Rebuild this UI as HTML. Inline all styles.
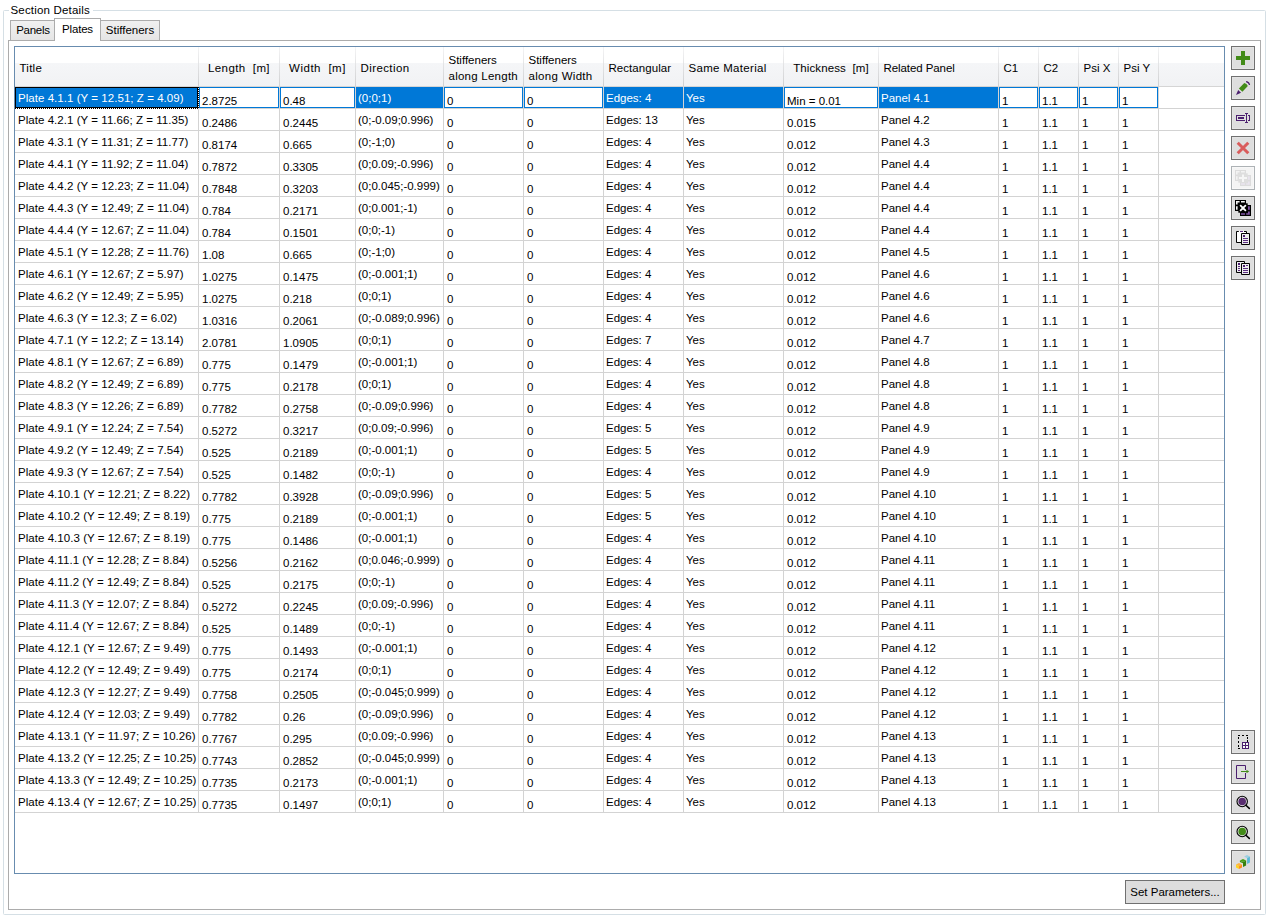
<!DOCTYPE html>
<html><head><meta charset="utf-8"><title>Section Details</title>
<style>
html,body{margin:0;padding:0;background:#fff;}
body{width:1270px;height:919px;position:relative;overflow:hidden;font-family:"Liberation Sans",sans-serif;font-size:11.5px;color:#000;}
div{box-sizing:border-box;}
.gb{position:absolute;left:3px;top:10px;width:1263px;height:905px;border:1px solid #d5dfe5;border-radius:1.5px;}
.gbt{position:absolute;left:9px;top:0;width:84px;height:20px;letter-spacing:0.18px;padding:0 0 0 1.5px;background:#fff;line-height:20px;white-space:nowrap;}
.tabc{position:absolute;left:8px;top:40px;width:1253px;height:870px;border:1px solid #acacac;background:#fff;}
.tab{position:absolute;top:20px;height:21px;border:1px solid #acacac;background:linear-gradient(#f0f0f0,#e5e5e5);line-height:19px;text-align:center;white-space:nowrap;}
.tab.on{top:18px;height:23px;background:#fff;border-bottom:none;line-height:20px;}
.grid{position:absolute;left:14px;top:46px;width:1211px;height:828px;border:1px solid #688caf;background:#fff;overflow:hidden;}
.hdr{position:absolute;left:0;top:0;width:1209px;height:40px;background:linear-gradient(#fff 0,#fff 16px,#f5f6f8 16px,#f1f2f4 39px);border-bottom:1px solid #d5d5d5;}
.hc{position:absolute;top:0;height:39px;line-height:16px;padding:13px 0 0 4.5px;white-space:nowrap;overflow:hidden;}
.hc.ctr{text-align:center;padding-left:0;}
.hc.two{padding-top:5px;}
.hs{position:absolute;top:0;width:1px;height:39px;background:linear-gradient(#f4f4f5,#cfd0d2);}
.vg{position:absolute;top:40px;width:1px;height:726px;background:#d3d3d3;}
.row{position:absolute;left:0;width:1209px;height:22px;border-bottom:1px solid #d3d3d3;}
.c{position:absolute;top:0;height:21px;white-space:nowrap;overflow:hidden;line-height:14px;}
.c.l0{padding:4px 0 0 3px;letter-spacing:0.045px;}
.c.l{padding:4px 0 0 2px;}
.c.t{padding:7px 0 0 3px;}
.sel .c.l0,.sel .c.l{background:#0078d7;color:#fff;}
.sel .c.l0{border:1px solid #000;padding:3px 0 0 2px;}
.sel .c.t{border:1px solid #0078d7;padding:6px 0 0 2px;background:#fff;}
.fv{position:absolute;left:0;top:61px;width:184px;height:1px;background:repeating-linear-gradient(90deg,#000 0,#000 1px,#fff 1px,#fff 2px);}
.fh{position:absolute;left:183px;top:40px;width:1px;height:22px;background:repeating-linear-gradient(180deg,#000 0,#000 1px,#fff 1px,#fff 2px);}
.btn{position:absolute;left:1231px;width:24px;height:24px;border:1px solid #707070;background:#dedede;box-shadow:inset 0 0 0 1px #e4e4e4;}
.btn.dis{border-color:#adb2b5;background:#f4f4f4;box-shadow:inset 0 0 0 1px #f8f8f8;}
.btn svg{position:absolute;left:3px;top:3px;width:16px;height:16px;}
.sp{position:absolute;left:1125px;top:880px;width:100px;height:24px;border:1px solid #707070;background:#ddd;text-align:center;line-height:23px;white-space:nowrap;}
</style></head><body>
<div class="gb"></div>
<div class="gbt">Section Details</div>
<div class="tabc"></div>
<div class="tab" style="left:10px;width:45px;letter-spacing:-0.25px;padding-left:1px">Panels</div>
<div class="tab" style="left:100px;width:60px">Stiffeners</div>
<div class="tab on" style="left:54px;width:47px;letter-spacing:-0.2px">Plates</div>
<div class="grid">

<div class="hdr">
<div class="hc l" style="left:0px;width:183px;letter-spacing:0.25px">Title</div>
<div class="hs" style="left:183px"></div>
<div class="hc ctr" style="left:184px;width:80px;letter-spacing:0.4px">Length&nbsp; [m]</div>
<div class="hs" style="left:264px"></div>
<div class="hc ctr" style="left:265px;width:75px;letter-spacing:0.5px">Width&nbsp; [m]</div>
<div class="hs" style="left:340px"></div>
<div class="hc l" style="left:341px;width:87px;letter-spacing:0.4px">Direction</div>
<div class="hs" style="left:428px"></div>
<div class="hc l two" style="left:429px;width:79px">Stiffeners<br><span style='letter-spacing:0.25px'>along Length</span></div>
<div class="hs" style="left:508px"></div>
<div class="hc l two" style="left:509px;width:79px">Stiffeners<br><span style='letter-spacing:0.3px'>along Width</span></div>
<div class="hs" style="left:588px"></div>
<div class="hc l" style="left:589px;width:79px;letter-spacing:0.05px">Rectangular</div>
<div class="hs" style="left:668px"></div>
<div class="hc l" style="left:669px;width:99px;letter-spacing:0.3px">Same Material</div>
<div class="hs" style="left:768px"></div>
<div class="hc ctr" style="left:769px;width:94px;letter-spacing:0.1px">Thickness&nbsp; [m]</div>
<div class="hs" style="left:863px"></div>
<div class="hc l" style="left:864px;width:119px;letter-spacing:-0.08px">Related Panel</div>
<div class="hs" style="left:983px"></div>
<div class="hc l" style="left:984px;width:39px">C1</div>
<div class="hs" style="left:1023px"></div>
<div class="hc l" style="left:1024px;width:39px">C2</div>
<div class="hs" style="left:1063px"></div>
<div class="hc l" style="left:1064px;width:39px">Psi X</div>
<div class="hs" style="left:1103px"></div>
<div class="hc l" style="left:1104px;width:39px">Psi Y</div>
<div class="hs" style="left:1143px"></div>
</div>
<div class="vg" style="left:183px"></div>
<div class="vg" style="left:264px"></div>
<div class="vg" style="left:340px"></div>
<div class="vg" style="left:428px"></div>
<div class="vg" style="left:508px"></div>
<div class="vg" style="left:588px"></div>
<div class="vg" style="left:668px"></div>
<div class="vg" style="left:768px"></div>
<div class="vg" style="left:863px"></div>
<div class="vg" style="left:983px"></div>
<div class="vg" style="left:1023px"></div>
<div class="vg" style="left:1063px"></div>
<div class="vg" style="left:1103px"></div>
<div class="vg" style="left:1143px"></div>
<div class="row sel" style="top:40px">
<div class="c l0" style="left:0px;width:183px">Plate 4.1.1 (Y = 12.51; Z = 4.09)</div>
<div class="c t" style="left:184px;width:80px">2.8725</div>
<div class="c t" style="left:265px;width:75px">0.48</div>
<div class="c l" style="left:341px;width:87px">(0;0;1)</div>
<div class="c t" style="left:429px;width:79px">0</div>
<div class="c t" style="left:509px;width:79px">0</div>
<div class="c l" style="left:589px;width:79px">Edges: 4</div>
<div class="c l" style="left:669px;width:99px">Yes</div>
<div class="c t" style="left:769px;width:94px">Min = 0.01</div>
<div class="c l" style="left:864px;width:119px">Panel 4.1</div>
<div class="c t" style="left:984px;width:39px">1</div>
<div class="c t" style="left:1024px;width:39px">1.1</div>
<div class="c t" style="left:1064px;width:39px">1</div>
<div class="c t" style="left:1104px;width:39px">1</div>
</div>
<div class="row" style="top:62px">
<div class="c l0" style="left:0px;width:183px">Plate 4.2.1 (Y = 11.66; Z = 11.35)</div>
<div class="c t" style="left:184px;width:80px">0.2486</div>
<div class="c t" style="left:265px;width:75px">0.2445</div>
<div class="c l" style="left:341px;width:87px">(0;-0.09;0.996)</div>
<div class="c t" style="left:429px;width:79px">0</div>
<div class="c t" style="left:509px;width:79px">0</div>
<div class="c l" style="left:589px;width:79px">Edges: 13</div>
<div class="c l" style="left:669px;width:99px">Yes</div>
<div class="c t" style="left:769px;width:94px">0.015</div>
<div class="c l" style="left:864px;width:119px">Panel 4.2</div>
<div class="c t" style="left:984px;width:39px">1</div>
<div class="c t" style="left:1024px;width:39px">1.1</div>
<div class="c t" style="left:1064px;width:39px">1</div>
<div class="c t" style="left:1104px;width:39px">1</div>
</div>
<div class="row" style="top:84px">
<div class="c l0" style="left:0px;width:183px">Plate 4.3.1 (Y = 11.31; Z = 11.77)</div>
<div class="c t" style="left:184px;width:80px">0.8174</div>
<div class="c t" style="left:265px;width:75px">0.665</div>
<div class="c l" style="left:341px;width:87px">(0;-1;0)</div>
<div class="c t" style="left:429px;width:79px">0</div>
<div class="c t" style="left:509px;width:79px">0</div>
<div class="c l" style="left:589px;width:79px">Edges: 4</div>
<div class="c l" style="left:669px;width:99px">Yes</div>
<div class="c t" style="left:769px;width:94px">0.012</div>
<div class="c l" style="left:864px;width:119px">Panel 4.3</div>
<div class="c t" style="left:984px;width:39px">1</div>
<div class="c t" style="left:1024px;width:39px">1.1</div>
<div class="c t" style="left:1064px;width:39px">1</div>
<div class="c t" style="left:1104px;width:39px">1</div>
</div>
<div class="row" style="top:106px">
<div class="c l0" style="left:0px;width:183px">Plate 4.4.1 (Y = 11.92; Z = 11.04)</div>
<div class="c t" style="left:184px;width:80px">0.7872</div>
<div class="c t" style="left:265px;width:75px">0.3305</div>
<div class="c l" style="left:341px;width:87px">(0;0.09;-0.996)</div>
<div class="c t" style="left:429px;width:79px">0</div>
<div class="c t" style="left:509px;width:79px">0</div>
<div class="c l" style="left:589px;width:79px">Edges: 4</div>
<div class="c l" style="left:669px;width:99px">Yes</div>
<div class="c t" style="left:769px;width:94px">0.012</div>
<div class="c l" style="left:864px;width:119px">Panel 4.4</div>
<div class="c t" style="left:984px;width:39px">1</div>
<div class="c t" style="left:1024px;width:39px">1.1</div>
<div class="c t" style="left:1064px;width:39px">1</div>
<div class="c t" style="left:1104px;width:39px">1</div>
</div>
<div class="row" style="top:128px">
<div class="c l0" style="left:0px;width:183px">Plate 4.4.2 (Y = 12.23; Z = 11.04)</div>
<div class="c t" style="left:184px;width:80px">0.7848</div>
<div class="c t" style="left:265px;width:75px">0.3203</div>
<div class="c l" style="left:341px;width:87px">(0;0.045;-0.999)</div>
<div class="c t" style="left:429px;width:79px">0</div>
<div class="c t" style="left:509px;width:79px">0</div>
<div class="c l" style="left:589px;width:79px">Edges: 4</div>
<div class="c l" style="left:669px;width:99px">Yes</div>
<div class="c t" style="left:769px;width:94px">0.012</div>
<div class="c l" style="left:864px;width:119px">Panel 4.4</div>
<div class="c t" style="left:984px;width:39px">1</div>
<div class="c t" style="left:1024px;width:39px">1.1</div>
<div class="c t" style="left:1064px;width:39px">1</div>
<div class="c t" style="left:1104px;width:39px">1</div>
</div>
<div class="row" style="top:150px">
<div class="c l0" style="left:0px;width:183px">Plate 4.4.3 (Y = 12.49; Z = 11.04)</div>
<div class="c t" style="left:184px;width:80px">0.784</div>
<div class="c t" style="left:265px;width:75px">0.2171</div>
<div class="c l" style="left:341px;width:87px">(0;0.001;-1)</div>
<div class="c t" style="left:429px;width:79px">0</div>
<div class="c t" style="left:509px;width:79px">0</div>
<div class="c l" style="left:589px;width:79px">Edges: 4</div>
<div class="c l" style="left:669px;width:99px">Yes</div>
<div class="c t" style="left:769px;width:94px">0.012</div>
<div class="c l" style="left:864px;width:119px">Panel 4.4</div>
<div class="c t" style="left:984px;width:39px">1</div>
<div class="c t" style="left:1024px;width:39px">1.1</div>
<div class="c t" style="left:1064px;width:39px">1</div>
<div class="c t" style="left:1104px;width:39px">1</div>
</div>
<div class="row" style="top:172px">
<div class="c l0" style="left:0px;width:183px">Plate 4.4.4 (Y = 12.67; Z = 11.04)</div>
<div class="c t" style="left:184px;width:80px">0.784</div>
<div class="c t" style="left:265px;width:75px">0.1501</div>
<div class="c l" style="left:341px;width:87px">(0;0;-1)</div>
<div class="c t" style="left:429px;width:79px">0</div>
<div class="c t" style="left:509px;width:79px">0</div>
<div class="c l" style="left:589px;width:79px">Edges: 4</div>
<div class="c l" style="left:669px;width:99px">Yes</div>
<div class="c t" style="left:769px;width:94px">0.012</div>
<div class="c l" style="left:864px;width:119px">Panel 4.4</div>
<div class="c t" style="left:984px;width:39px">1</div>
<div class="c t" style="left:1024px;width:39px">1.1</div>
<div class="c t" style="left:1064px;width:39px">1</div>
<div class="c t" style="left:1104px;width:39px">1</div>
</div>
<div class="row" style="top:194px">
<div class="c l0" style="left:0px;width:183px">Plate 4.5.1 (Y = 12.28; Z = 11.76)</div>
<div class="c t" style="left:184px;width:80px">1.08</div>
<div class="c t" style="left:265px;width:75px">0.665</div>
<div class="c l" style="left:341px;width:87px">(0;-1;0)</div>
<div class="c t" style="left:429px;width:79px">0</div>
<div class="c t" style="left:509px;width:79px">0</div>
<div class="c l" style="left:589px;width:79px">Edges: 4</div>
<div class="c l" style="left:669px;width:99px">Yes</div>
<div class="c t" style="left:769px;width:94px">0.012</div>
<div class="c l" style="left:864px;width:119px">Panel 4.5</div>
<div class="c t" style="left:984px;width:39px">1</div>
<div class="c t" style="left:1024px;width:39px">1.1</div>
<div class="c t" style="left:1064px;width:39px">1</div>
<div class="c t" style="left:1104px;width:39px">1</div>
</div>
<div class="row" style="top:216px">
<div class="c l0" style="left:0px;width:183px">Plate 4.6.1 (Y = 12.67; Z = 5.97)</div>
<div class="c t" style="left:184px;width:80px">1.0275</div>
<div class="c t" style="left:265px;width:75px">0.1475</div>
<div class="c l" style="left:341px;width:87px">(0;-0.001;1)</div>
<div class="c t" style="left:429px;width:79px">0</div>
<div class="c t" style="left:509px;width:79px">0</div>
<div class="c l" style="left:589px;width:79px">Edges: 4</div>
<div class="c l" style="left:669px;width:99px">Yes</div>
<div class="c t" style="left:769px;width:94px">0.012</div>
<div class="c l" style="left:864px;width:119px">Panel 4.6</div>
<div class="c t" style="left:984px;width:39px">1</div>
<div class="c t" style="left:1024px;width:39px">1.1</div>
<div class="c t" style="left:1064px;width:39px">1</div>
<div class="c t" style="left:1104px;width:39px">1</div>
</div>
<div class="row" style="top:238px">
<div class="c l0" style="left:0px;width:183px">Plate 4.6.2 (Y = 12.49; Z = 5.95)</div>
<div class="c t" style="left:184px;width:80px">1.0275</div>
<div class="c t" style="left:265px;width:75px">0.218</div>
<div class="c l" style="left:341px;width:87px">(0;0;1)</div>
<div class="c t" style="left:429px;width:79px">0</div>
<div class="c t" style="left:509px;width:79px">0</div>
<div class="c l" style="left:589px;width:79px">Edges: 4</div>
<div class="c l" style="left:669px;width:99px">Yes</div>
<div class="c t" style="left:769px;width:94px">0.012</div>
<div class="c l" style="left:864px;width:119px">Panel 4.6</div>
<div class="c t" style="left:984px;width:39px">1</div>
<div class="c t" style="left:1024px;width:39px">1.1</div>
<div class="c t" style="left:1064px;width:39px">1</div>
<div class="c t" style="left:1104px;width:39px">1</div>
</div>
<div class="row" style="top:260px">
<div class="c l0" style="left:0px;width:183px">Plate 4.6.3 (Y = 12.3; Z = 6.02)</div>
<div class="c t" style="left:184px;width:80px">1.0316</div>
<div class="c t" style="left:265px;width:75px">0.2061</div>
<div class="c l" style="left:341px;width:87px">(0;-0.089;0.996)</div>
<div class="c t" style="left:429px;width:79px">0</div>
<div class="c t" style="left:509px;width:79px">0</div>
<div class="c l" style="left:589px;width:79px">Edges: 4</div>
<div class="c l" style="left:669px;width:99px">Yes</div>
<div class="c t" style="left:769px;width:94px">0.012</div>
<div class="c l" style="left:864px;width:119px">Panel 4.6</div>
<div class="c t" style="left:984px;width:39px">1</div>
<div class="c t" style="left:1024px;width:39px">1.1</div>
<div class="c t" style="left:1064px;width:39px">1</div>
<div class="c t" style="left:1104px;width:39px">1</div>
</div>
<div class="row" style="top:282px">
<div class="c l0" style="left:0px;width:183px">Plate 4.7.1 (Y = 12.2; Z = 13.14)</div>
<div class="c t" style="left:184px;width:80px">2.0781</div>
<div class="c t" style="left:265px;width:75px">1.0905</div>
<div class="c l" style="left:341px;width:87px">(0;0;1)</div>
<div class="c t" style="left:429px;width:79px">0</div>
<div class="c t" style="left:509px;width:79px">0</div>
<div class="c l" style="left:589px;width:79px">Edges: 7</div>
<div class="c l" style="left:669px;width:99px">Yes</div>
<div class="c t" style="left:769px;width:94px">0.012</div>
<div class="c l" style="left:864px;width:119px">Panel 4.7</div>
<div class="c t" style="left:984px;width:39px">1</div>
<div class="c t" style="left:1024px;width:39px">1.1</div>
<div class="c t" style="left:1064px;width:39px">1</div>
<div class="c t" style="left:1104px;width:39px">1</div>
</div>
<div class="row" style="top:304px">
<div class="c l0" style="left:0px;width:183px">Plate 4.8.1 (Y = 12.67; Z = 6.89)</div>
<div class="c t" style="left:184px;width:80px">0.775</div>
<div class="c t" style="left:265px;width:75px">0.1479</div>
<div class="c l" style="left:341px;width:87px">(0;-0.001;1)</div>
<div class="c t" style="left:429px;width:79px">0</div>
<div class="c t" style="left:509px;width:79px">0</div>
<div class="c l" style="left:589px;width:79px">Edges: 4</div>
<div class="c l" style="left:669px;width:99px">Yes</div>
<div class="c t" style="left:769px;width:94px">0.012</div>
<div class="c l" style="left:864px;width:119px">Panel 4.8</div>
<div class="c t" style="left:984px;width:39px">1</div>
<div class="c t" style="left:1024px;width:39px">1.1</div>
<div class="c t" style="left:1064px;width:39px">1</div>
<div class="c t" style="left:1104px;width:39px">1</div>
</div>
<div class="row" style="top:326px">
<div class="c l0" style="left:0px;width:183px">Plate 4.8.2 (Y = 12.49; Z = 6.89)</div>
<div class="c t" style="left:184px;width:80px">0.775</div>
<div class="c t" style="left:265px;width:75px">0.2178</div>
<div class="c l" style="left:341px;width:87px">(0;0;1)</div>
<div class="c t" style="left:429px;width:79px">0</div>
<div class="c t" style="left:509px;width:79px">0</div>
<div class="c l" style="left:589px;width:79px">Edges: 4</div>
<div class="c l" style="left:669px;width:99px">Yes</div>
<div class="c t" style="left:769px;width:94px">0.012</div>
<div class="c l" style="left:864px;width:119px">Panel 4.8</div>
<div class="c t" style="left:984px;width:39px">1</div>
<div class="c t" style="left:1024px;width:39px">1.1</div>
<div class="c t" style="left:1064px;width:39px">1</div>
<div class="c t" style="left:1104px;width:39px">1</div>
</div>
<div class="row" style="top:348px">
<div class="c l0" style="left:0px;width:183px">Plate 4.8.3 (Y = 12.26; Z = 6.89)</div>
<div class="c t" style="left:184px;width:80px">0.7782</div>
<div class="c t" style="left:265px;width:75px">0.2758</div>
<div class="c l" style="left:341px;width:87px">(0;-0.09;0.996)</div>
<div class="c t" style="left:429px;width:79px">0</div>
<div class="c t" style="left:509px;width:79px">0</div>
<div class="c l" style="left:589px;width:79px">Edges: 4</div>
<div class="c l" style="left:669px;width:99px">Yes</div>
<div class="c t" style="left:769px;width:94px">0.012</div>
<div class="c l" style="left:864px;width:119px">Panel 4.8</div>
<div class="c t" style="left:984px;width:39px">1</div>
<div class="c t" style="left:1024px;width:39px">1.1</div>
<div class="c t" style="left:1064px;width:39px">1</div>
<div class="c t" style="left:1104px;width:39px">1</div>
</div>
<div class="row" style="top:370px">
<div class="c l0" style="left:0px;width:183px">Plate 4.9.1 (Y = 12.24; Z = 7.54)</div>
<div class="c t" style="left:184px;width:80px">0.5272</div>
<div class="c t" style="left:265px;width:75px">0.3217</div>
<div class="c l" style="left:341px;width:87px">(0;0.09;-0.996)</div>
<div class="c t" style="left:429px;width:79px">0</div>
<div class="c t" style="left:509px;width:79px">0</div>
<div class="c l" style="left:589px;width:79px">Edges: 5</div>
<div class="c l" style="left:669px;width:99px">Yes</div>
<div class="c t" style="left:769px;width:94px">0.012</div>
<div class="c l" style="left:864px;width:119px">Panel 4.9</div>
<div class="c t" style="left:984px;width:39px">1</div>
<div class="c t" style="left:1024px;width:39px">1.1</div>
<div class="c t" style="left:1064px;width:39px">1</div>
<div class="c t" style="left:1104px;width:39px">1</div>
</div>
<div class="row" style="top:392px">
<div class="c l0" style="left:0px;width:183px">Plate 4.9.2 (Y = 12.49; Z = 7.54)</div>
<div class="c t" style="left:184px;width:80px">0.525</div>
<div class="c t" style="left:265px;width:75px">0.2189</div>
<div class="c l" style="left:341px;width:87px">(0;-0.001;1)</div>
<div class="c t" style="left:429px;width:79px">0</div>
<div class="c t" style="left:509px;width:79px">0</div>
<div class="c l" style="left:589px;width:79px">Edges: 5</div>
<div class="c l" style="left:669px;width:99px">Yes</div>
<div class="c t" style="left:769px;width:94px">0.012</div>
<div class="c l" style="left:864px;width:119px">Panel 4.9</div>
<div class="c t" style="left:984px;width:39px">1</div>
<div class="c t" style="left:1024px;width:39px">1.1</div>
<div class="c t" style="left:1064px;width:39px">1</div>
<div class="c t" style="left:1104px;width:39px">1</div>
</div>
<div class="row" style="top:414px">
<div class="c l0" style="left:0px;width:183px">Plate 4.9.3 (Y = 12.67; Z = 7.54)</div>
<div class="c t" style="left:184px;width:80px">0.525</div>
<div class="c t" style="left:265px;width:75px">0.1482</div>
<div class="c l" style="left:341px;width:87px">(0;0;-1)</div>
<div class="c t" style="left:429px;width:79px">0</div>
<div class="c t" style="left:509px;width:79px">0</div>
<div class="c l" style="left:589px;width:79px">Edges: 4</div>
<div class="c l" style="left:669px;width:99px">Yes</div>
<div class="c t" style="left:769px;width:94px">0.012</div>
<div class="c l" style="left:864px;width:119px">Panel 4.9</div>
<div class="c t" style="left:984px;width:39px">1</div>
<div class="c t" style="left:1024px;width:39px">1.1</div>
<div class="c t" style="left:1064px;width:39px">1</div>
<div class="c t" style="left:1104px;width:39px">1</div>
</div>
<div class="row" style="top:436px">
<div class="c l0" style="left:0px;width:183px">Plate 4.10.1 (Y = 12.21; Z = 8.22)</div>
<div class="c t" style="left:184px;width:80px">0.7782</div>
<div class="c t" style="left:265px;width:75px">0.3928</div>
<div class="c l" style="left:341px;width:87px">(0;-0.09;0.996)</div>
<div class="c t" style="left:429px;width:79px">0</div>
<div class="c t" style="left:509px;width:79px">0</div>
<div class="c l" style="left:589px;width:79px">Edges: 5</div>
<div class="c l" style="left:669px;width:99px">Yes</div>
<div class="c t" style="left:769px;width:94px">0.012</div>
<div class="c l" style="left:864px;width:119px">Panel 4.10</div>
<div class="c t" style="left:984px;width:39px">1</div>
<div class="c t" style="left:1024px;width:39px">1.1</div>
<div class="c t" style="left:1064px;width:39px">1</div>
<div class="c t" style="left:1104px;width:39px">1</div>
</div>
<div class="row" style="top:458px">
<div class="c l0" style="left:0px;width:183px">Plate 4.10.2 (Y = 12.49; Z = 8.19)</div>
<div class="c t" style="left:184px;width:80px">0.775</div>
<div class="c t" style="left:265px;width:75px">0.2189</div>
<div class="c l" style="left:341px;width:87px">(0;-0.001;1)</div>
<div class="c t" style="left:429px;width:79px">0</div>
<div class="c t" style="left:509px;width:79px">0</div>
<div class="c l" style="left:589px;width:79px">Edges: 5</div>
<div class="c l" style="left:669px;width:99px">Yes</div>
<div class="c t" style="left:769px;width:94px">0.012</div>
<div class="c l" style="left:864px;width:119px">Panel 4.10</div>
<div class="c t" style="left:984px;width:39px">1</div>
<div class="c t" style="left:1024px;width:39px">1.1</div>
<div class="c t" style="left:1064px;width:39px">1</div>
<div class="c t" style="left:1104px;width:39px">1</div>
</div>
<div class="row" style="top:480px">
<div class="c l0" style="left:0px;width:183px">Plate 4.10.3 (Y = 12.67; Z = 8.19)</div>
<div class="c t" style="left:184px;width:80px">0.775</div>
<div class="c t" style="left:265px;width:75px">0.1486</div>
<div class="c l" style="left:341px;width:87px">(0;-0.001;1)</div>
<div class="c t" style="left:429px;width:79px">0</div>
<div class="c t" style="left:509px;width:79px">0</div>
<div class="c l" style="left:589px;width:79px">Edges: 4</div>
<div class="c l" style="left:669px;width:99px">Yes</div>
<div class="c t" style="left:769px;width:94px">0.012</div>
<div class="c l" style="left:864px;width:119px">Panel 4.10</div>
<div class="c t" style="left:984px;width:39px">1</div>
<div class="c t" style="left:1024px;width:39px">1.1</div>
<div class="c t" style="left:1064px;width:39px">1</div>
<div class="c t" style="left:1104px;width:39px">1</div>
</div>
<div class="row" style="top:502px">
<div class="c l0" style="left:0px;width:183px">Plate 4.11.1 (Y = 12.28; Z = 8.84)</div>
<div class="c t" style="left:184px;width:80px">0.5256</div>
<div class="c t" style="left:265px;width:75px">0.2162</div>
<div class="c l" style="left:341px;width:87px">(0;0.046;-0.999)</div>
<div class="c t" style="left:429px;width:79px">0</div>
<div class="c t" style="left:509px;width:79px">0</div>
<div class="c l" style="left:589px;width:79px">Edges: 4</div>
<div class="c l" style="left:669px;width:99px">Yes</div>
<div class="c t" style="left:769px;width:94px">0.012</div>
<div class="c l" style="left:864px;width:119px">Panel 4.11</div>
<div class="c t" style="left:984px;width:39px">1</div>
<div class="c t" style="left:1024px;width:39px">1.1</div>
<div class="c t" style="left:1064px;width:39px">1</div>
<div class="c t" style="left:1104px;width:39px">1</div>
</div>
<div class="row" style="top:524px">
<div class="c l0" style="left:0px;width:183px">Plate 4.11.2 (Y = 12.49; Z = 8.84)</div>
<div class="c t" style="left:184px;width:80px">0.525</div>
<div class="c t" style="left:265px;width:75px">0.2175</div>
<div class="c l" style="left:341px;width:87px">(0;0;-1)</div>
<div class="c t" style="left:429px;width:79px">0</div>
<div class="c t" style="left:509px;width:79px">0</div>
<div class="c l" style="left:589px;width:79px">Edges: 4</div>
<div class="c l" style="left:669px;width:99px">Yes</div>
<div class="c t" style="left:769px;width:94px">0.012</div>
<div class="c l" style="left:864px;width:119px">Panel 4.11</div>
<div class="c t" style="left:984px;width:39px">1</div>
<div class="c t" style="left:1024px;width:39px">1.1</div>
<div class="c t" style="left:1064px;width:39px">1</div>
<div class="c t" style="left:1104px;width:39px">1</div>
</div>
<div class="row" style="top:546px">
<div class="c l0" style="left:0px;width:183px">Plate 4.11.3 (Y = 12.07; Z = 8.84)</div>
<div class="c t" style="left:184px;width:80px">0.5272</div>
<div class="c t" style="left:265px;width:75px">0.2245</div>
<div class="c l" style="left:341px;width:87px">(0;0.09;-0.996)</div>
<div class="c t" style="left:429px;width:79px">0</div>
<div class="c t" style="left:509px;width:79px">0</div>
<div class="c l" style="left:589px;width:79px">Edges: 4</div>
<div class="c l" style="left:669px;width:99px">Yes</div>
<div class="c t" style="left:769px;width:94px">0.012</div>
<div class="c l" style="left:864px;width:119px">Panel 4.11</div>
<div class="c t" style="left:984px;width:39px">1</div>
<div class="c t" style="left:1024px;width:39px">1.1</div>
<div class="c t" style="left:1064px;width:39px">1</div>
<div class="c t" style="left:1104px;width:39px">1</div>
</div>
<div class="row" style="top:568px">
<div class="c l0" style="left:0px;width:183px">Plate 4.11.4 (Y = 12.67; Z = 8.84)</div>
<div class="c t" style="left:184px;width:80px">0.525</div>
<div class="c t" style="left:265px;width:75px">0.1489</div>
<div class="c l" style="left:341px;width:87px">(0;0;-1)</div>
<div class="c t" style="left:429px;width:79px">0</div>
<div class="c t" style="left:509px;width:79px">0</div>
<div class="c l" style="left:589px;width:79px">Edges: 4</div>
<div class="c l" style="left:669px;width:99px">Yes</div>
<div class="c t" style="left:769px;width:94px">0.012</div>
<div class="c l" style="left:864px;width:119px">Panel 4.11</div>
<div class="c t" style="left:984px;width:39px">1</div>
<div class="c t" style="left:1024px;width:39px">1.1</div>
<div class="c t" style="left:1064px;width:39px">1</div>
<div class="c t" style="left:1104px;width:39px">1</div>
</div>
<div class="row" style="top:590px">
<div class="c l0" style="left:0px;width:183px">Plate 4.12.1 (Y = 12.67; Z = 9.49)</div>
<div class="c t" style="left:184px;width:80px">0.775</div>
<div class="c t" style="left:265px;width:75px">0.1493</div>
<div class="c l" style="left:341px;width:87px">(0;-0.001;1)</div>
<div class="c t" style="left:429px;width:79px">0</div>
<div class="c t" style="left:509px;width:79px">0</div>
<div class="c l" style="left:589px;width:79px">Edges: 4</div>
<div class="c l" style="left:669px;width:99px">Yes</div>
<div class="c t" style="left:769px;width:94px">0.012</div>
<div class="c l" style="left:864px;width:119px">Panel 4.12</div>
<div class="c t" style="left:984px;width:39px">1</div>
<div class="c t" style="left:1024px;width:39px">1.1</div>
<div class="c t" style="left:1064px;width:39px">1</div>
<div class="c t" style="left:1104px;width:39px">1</div>
</div>
<div class="row" style="top:612px">
<div class="c l0" style="left:0px;width:183px">Plate 4.12.2 (Y = 12.49; Z = 9.49)</div>
<div class="c t" style="left:184px;width:80px">0.775</div>
<div class="c t" style="left:265px;width:75px">0.2174</div>
<div class="c l" style="left:341px;width:87px">(0;0;1)</div>
<div class="c t" style="left:429px;width:79px">0</div>
<div class="c t" style="left:509px;width:79px">0</div>
<div class="c l" style="left:589px;width:79px">Edges: 4</div>
<div class="c l" style="left:669px;width:99px">Yes</div>
<div class="c t" style="left:769px;width:94px">0.012</div>
<div class="c l" style="left:864px;width:119px">Panel 4.12</div>
<div class="c t" style="left:984px;width:39px">1</div>
<div class="c t" style="left:1024px;width:39px">1.1</div>
<div class="c t" style="left:1064px;width:39px">1</div>
<div class="c t" style="left:1104px;width:39px">1</div>
</div>
<div class="row" style="top:634px">
<div class="c l0" style="left:0px;width:183px">Plate 4.12.3 (Y = 12.27; Z = 9.49)</div>
<div class="c t" style="left:184px;width:80px">0.7758</div>
<div class="c t" style="left:265px;width:75px">0.2505</div>
<div class="c l" style="left:341px;width:87px">(0;-0.045;0.999)</div>
<div class="c t" style="left:429px;width:79px">0</div>
<div class="c t" style="left:509px;width:79px">0</div>
<div class="c l" style="left:589px;width:79px">Edges: 4</div>
<div class="c l" style="left:669px;width:99px">Yes</div>
<div class="c t" style="left:769px;width:94px">0.012</div>
<div class="c l" style="left:864px;width:119px">Panel 4.12</div>
<div class="c t" style="left:984px;width:39px">1</div>
<div class="c t" style="left:1024px;width:39px">1.1</div>
<div class="c t" style="left:1064px;width:39px">1</div>
<div class="c t" style="left:1104px;width:39px">1</div>
</div>
<div class="row" style="top:656px">
<div class="c l0" style="left:0px;width:183px">Plate 4.12.4 (Y = 12.03; Z = 9.49)</div>
<div class="c t" style="left:184px;width:80px">0.7782</div>
<div class="c t" style="left:265px;width:75px">0.26</div>
<div class="c l" style="left:341px;width:87px">(0;-0.09;0.996)</div>
<div class="c t" style="left:429px;width:79px">0</div>
<div class="c t" style="left:509px;width:79px">0</div>
<div class="c l" style="left:589px;width:79px">Edges: 4</div>
<div class="c l" style="left:669px;width:99px">Yes</div>
<div class="c t" style="left:769px;width:94px">0.012</div>
<div class="c l" style="left:864px;width:119px">Panel 4.12</div>
<div class="c t" style="left:984px;width:39px">1</div>
<div class="c t" style="left:1024px;width:39px">1.1</div>
<div class="c t" style="left:1064px;width:39px">1</div>
<div class="c t" style="left:1104px;width:39px">1</div>
</div>
<div class="row" style="top:678px">
<div class="c l0" style="left:0px;width:183px">Plate 4.13.1 (Y = 11.97; Z = 10.26)</div>
<div class="c t" style="left:184px;width:80px">0.7767</div>
<div class="c t" style="left:265px;width:75px">0.295</div>
<div class="c l" style="left:341px;width:87px">(0;0.09;-0.996)</div>
<div class="c t" style="left:429px;width:79px">0</div>
<div class="c t" style="left:509px;width:79px">0</div>
<div class="c l" style="left:589px;width:79px">Edges: 4</div>
<div class="c l" style="left:669px;width:99px">Yes</div>
<div class="c t" style="left:769px;width:94px">0.012</div>
<div class="c l" style="left:864px;width:119px">Panel 4.13</div>
<div class="c t" style="left:984px;width:39px">1</div>
<div class="c t" style="left:1024px;width:39px">1.1</div>
<div class="c t" style="left:1064px;width:39px">1</div>
<div class="c t" style="left:1104px;width:39px">1</div>
</div>
<div class="row" style="top:700px">
<div class="c l0" style="left:0px;width:183px">Plate 4.13.2 (Y = 12.25; Z = 10.25)</div>
<div class="c t" style="left:184px;width:80px">0.7743</div>
<div class="c t" style="left:265px;width:75px">0.2852</div>
<div class="c l" style="left:341px;width:87px">(0;-0.045;0.999)</div>
<div class="c t" style="left:429px;width:79px">0</div>
<div class="c t" style="left:509px;width:79px">0</div>
<div class="c l" style="left:589px;width:79px">Edges: 4</div>
<div class="c l" style="left:669px;width:99px">Yes</div>
<div class="c t" style="left:769px;width:94px">0.012</div>
<div class="c l" style="left:864px;width:119px">Panel 4.13</div>
<div class="c t" style="left:984px;width:39px">1</div>
<div class="c t" style="left:1024px;width:39px">1.1</div>
<div class="c t" style="left:1064px;width:39px">1</div>
<div class="c t" style="left:1104px;width:39px">1</div>
</div>
<div class="row" style="top:722px">
<div class="c l0" style="left:0px;width:183px">Plate 4.13.3 (Y = 12.49; Z = 10.25)</div>
<div class="c t" style="left:184px;width:80px">0.7735</div>
<div class="c t" style="left:265px;width:75px">0.2173</div>
<div class="c l" style="left:341px;width:87px">(0;-0.001;1)</div>
<div class="c t" style="left:429px;width:79px">0</div>
<div class="c t" style="left:509px;width:79px">0</div>
<div class="c l" style="left:589px;width:79px">Edges: 4</div>
<div class="c l" style="left:669px;width:99px">Yes</div>
<div class="c t" style="left:769px;width:94px">0.012</div>
<div class="c l" style="left:864px;width:119px">Panel 4.13</div>
<div class="c t" style="left:984px;width:39px">1</div>
<div class="c t" style="left:1024px;width:39px">1.1</div>
<div class="c t" style="left:1064px;width:39px">1</div>
<div class="c t" style="left:1104px;width:39px">1</div>
</div>
<div class="row" style="top:744px">
<div class="c l0" style="left:0px;width:183px">Plate 4.13.4 (Y = 12.67; Z = 10.25)</div>
<div class="c t" style="left:184px;width:80px">0.7735</div>
<div class="c t" style="left:265px;width:75px">0.1497</div>
<div class="c l" style="left:341px;width:87px">(0;0;1)</div>
<div class="c t" style="left:429px;width:79px">0</div>
<div class="c t" style="left:509px;width:79px">0</div>
<div class="c l" style="left:589px;width:79px">Edges: 4</div>
<div class="c l" style="left:669px;width:99px">Yes</div>
<div class="c t" style="left:769px;width:94px">0.012</div>
<div class="c l" style="left:864px;width:119px">Panel 4.13</div>
<div class="c t" style="left:984px;width:39px">1</div>
<div class="c t" style="left:1024px;width:39px">1.1</div>
<div class="c t" style="left:1064px;width:39px">1</div>
<div class="c t" style="left:1104px;width:39px">1</div>
</div>
<div class="fv"></div><div class="fh"></div>
</div>
<!-- toolbar buttons -->
<div class="btn" style="top:46px"><svg viewBox="0 0 16 16"><path d="M6 1h4v5h5v4h-5v5H6v-5H1V6h5z" fill="#428b18"/></svg></div>
<div class="btn" style="top:76px"><svg viewBox="0 0 16 16"><path d="M1 15L3.200 10 6 12.800z" fill="#4b1f6f"/><path d="M3.900 8.600L9.300 2.900Q11.800 3.400 12.800 6L7.400 11.800z" fill="#428b18"/><path d="M11.700 1.700Q13.900 2.300 14.400 4.300" fill="none" stroke="#4b1f6f" stroke-width="1.400" stroke-linecap="round"/></svg></div>
<div class="btn" style="top:106px"><svg viewBox="0 0 16 16" shape-rendering="crispEdges" fill="#4b1f6f"><rect x="1" y="5" width="9" height="1"/><rect x="1" y="10" width="9" height="1"/><rect x="1" y="5" width="1" height="6"/><rect x="13" y="5" width="2" height="1"/><rect x="14" y="5" width="1" height="6"/><rect x="13" y="10" width="2" height="1"/><rect x="11" y="3" width="1" height="10"/><rect x="10" y="3" width="3" height="1"/><rect x="10" y="12" width="3" height="1"/><rect x="3" y="7" width="6" height="2"/></svg></div>
<div class="btn" style="top:136px"><svg viewBox="0 0 16 16"><path d="M2.700 2.700L13.300 13.300M13.300 2.700L2.700 13.300" stroke="#d95c5c" stroke-width="3" fill="none"/></svg></div>
<div class="btn dis" style="top:166px"><svg viewBox="0 0 16 16"><rect x="0" y="0" width="11" height="11" fill="#dcdcdc"/><path d="M1 1h3.600v1.600H2.600v2H1zM6 1h3.800v1.600H6zM1 6.200h1.600v3.600H1z" fill="#f3f3f3"/><rect x="5" y="5" width="11" height="11" fill="#dcdcdc"/><path d="M13 6.200h1.800v3.600H13zM11.200 13.200h1.800v-1.800h1.800v3.400h-3.600zM6 13.200h4v1.600H6z" fill="#e9e4ee"/><rect x="3.300" y="3.300" width="9.400" height="9.400" fill="#dedede"/><path d="M7 4.500h2v2.500h3v2H9v3H7V9H4V7h3z" fill="#f6f6f6"/></svg></div>
<div class="btn" style="top:196px"><svg viewBox="0 0 16 16"><rect x="0" y="0" width="11" height="11" fill="#000"/><path d="M1 1h3.600v1.600H2.600v2H1zM6 1h3.800v1.600H6zM1 6.200h1.600v3.600H1z" fill="#f4f4f4"/><rect x="5" y="5" width="11" height="11" fill="#000"/><path d="M13 6.200h1.800v3.600H13zM11.200 13.200h1.800v-1.800h1.800v3.400h-3.600zM6 13.200h4v1.600H6z" fill="#8054a5"/><rect x="3.300" y="3.300" width="9.400" height="9.400" fill="#000"/><path d="M5.600 5.600l4.800 4.800M10.400 5.600l-4.800 4.800" stroke="#fff" stroke-width="1.800" stroke-linecap="round"/></svg></div>
<div class="btn" style="top:226px"><svg viewBox="0 0 16 16"><path d="M1.500 1.500h10v11h-10z" fill="#fff" stroke="#000"/><rect x="3.800" y="0.800" width="5.200" height="1.400" fill="#fff"/><rect x="5" y="1" width="3" height="1" fill="#5a2d80"/><path d="M6.500 3.500h8v11h-8z" fill="#eee" stroke="#000"/><rect x="8" y="5" width="2" height="2" fill="#4b1f6f"/><path d="M8 8.500h5M8 10.500h5M8 12.500h5" stroke="#5a2d80" stroke-width="1"/></svg></div>
<div class="btn" style="top:256px"><svg viewBox="0 0 16 16"><path d="M1.500 1.500h8v11h-8z" fill="#eee" stroke="#000"/><rect x="3" y="3" width="2" height="2" fill="#4b1f6f"/><path d="M3 6.500h2M3 8.500h2M3 10.500h2" stroke="#5a2d80" stroke-width="1"/><path d="M6.500 3.500h8v11h-8z" fill="#eee" stroke="#000"/><rect x="8" y="5" width="2" height="2" fill="#4b1f6f"/><path d="M11 5.500h2M8 8.500h5M8 10.500h5M8 12.500h5" stroke="#5a2d80" stroke-width="1"/></svg></div>

<div class="btn" style="top:730px"><svg viewBox="0 0 16 16" shape-rendering="crispEdges"><g fill="#000"><rect x="3" y="1" width="2" height="1"/><rect x="7" y="1" width="2" height="1"/><rect x="11" y="1" width="2" height="1"/><rect x="3" y="3" width="1" height="2"/><rect x="3" y="7" width="1" height="2"/><rect x="3" y="11" width="1" height="2"/><rect x="3" y="14" width="2" height="1"/><rect x="12" y="3" width="1" height="2"/><rect x="12" y="6" width="1" height="2"/></g><rect x="7" y="8" width="7" height="7" fill="#4b1f6f"/><g fill="#f8fcf6"><rect x="8" y="9" width="2" height="2"/><rect x="11" y="9" width="2" height="2"/><rect x="8" y="12" width="2" height="2"/><rect x="11" y="12" width="2" height="2"/></g></svg></div>
<div class="btn" style="top:760px"><svg viewBox="0 0 16 16"><path d="M10.500 6V1.500h-9v13h9V9" fill="none" stroke="#4b1f6f" stroke-width="1"/><rect x="6" y="7" width="6.500" height="1" fill="#428b18"/><path d="M11.500 5.700L14.200 7.500 11.500 9.300z" fill="#428b18"/></svg></div>
<div class="btn" style="top:790px"><svg viewBox="0 0 16 16"><circle cx="7.200" cy="7.500" r="5.200" fill="#e6e6e6" stroke="#000" stroke-width="1.100"/><circle cx="7.200" cy="7.500" r="3.800" fill="#592d70"/><path d="M10.900 11.200L14.300 14.400" stroke="#000" stroke-width="1.500" stroke-linecap="round"/></svg></div>
<div class="btn" style="top:820px"><svg viewBox="0 0 16 16"><circle cx="7.200" cy="7.500" r="5.200" fill="#e6e6e6" stroke="#000" stroke-width="1.100"/><circle cx="7.200" cy="7.500" r="3.800" fill="#428b18"/><path d="M10.900 11.200L14.300 14.400" stroke="#000" stroke-width="1.500" stroke-linecap="round"/></svg></div>
<div class="btn" style="top:850px"><svg viewBox="0 0 16 16"><path d="M9.200 2.600L12 1l2.900 1.600-2.800 1.600z" fill="#9dd0e2"/><path d="M12.100 4.200l2.800-1.600v6l-2.800 1.500z" fill="#55b8d6"/><path d="M4.900 6.500L8 5l3.100 1.500L8 8z" fill="#45a012"/><path d="M4.900 6.500L8 8v1.200L4.900 8z" fill="#3f9410"/><path d="M8 8l3.100-1.500v5L8 13z" fill="#36800d"/><path d="M1 10.600L4 9l3 1.600-3 1.600z" fill="#ffb340"/><path d="M1 10.600l3 1.600V15l-3-1.600z" fill="#ffd321"/><path d="M4 12.200l3-1.600v2.800L4 15z" fill="#ff8c1a"/></svg></div>
<div class="sp">Set Parameters...</div>
</body></html>
